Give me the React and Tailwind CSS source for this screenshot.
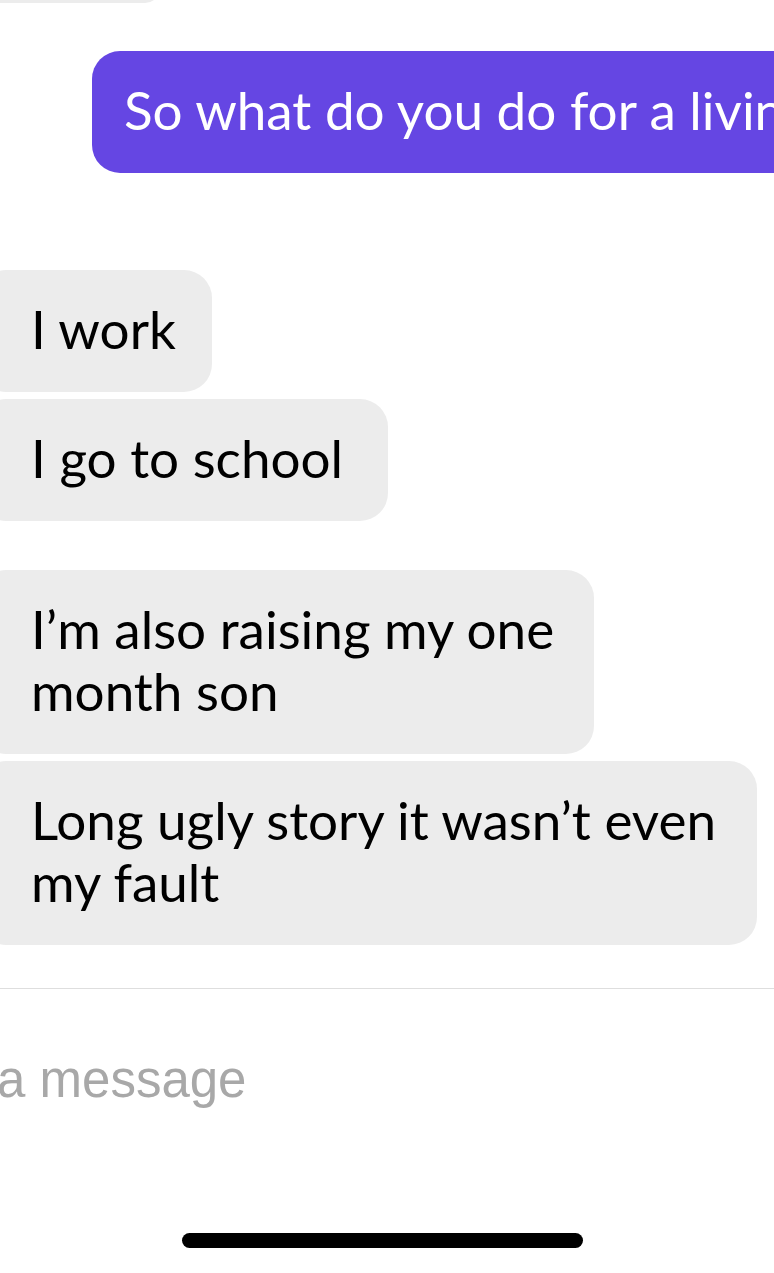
export default function App() {
  const bubble = "bg-[#ececec] text-black ml-[-22px] rounded-[28px] pl-[53px] pt-[28px] pb-[32px] leading-[62px]";

  return (
    <div
      className="w-full h-[1273px] overflow-hidden bg-white flex flex-col"
      style={{ fontFamily: 'Lato, "Open Sans", sans-serif' }}
    >
      {/* tail of previous message */}
      <div className="bg-[#ececec] w-[182px] h-[30px] ml-[-22px] mt-[-27px] rounded-[28px] shrink-0" />

      <div className="text-[53px] flex flex-col">
        {/* outgoing */}
        <div className="mt-[48px] ml-[92px] w-[720px] shrink-0 bg-[#6546e3] text-white rounded-[28px] pl-[32px] pt-[28px] pb-[32px] leading-[62px] whitespace-nowrap">
          So what do you do for a living?
        </div>

        {/* incoming */}
        <div className="mt-[97px] flex flex-col gap-[7px]">
          <div className={`${bubble} w-[234px]`}>I work</div>
          <div className={`${bubble} w-[410px]`}>I go to school</div>
        </div>

        <div className="mt-[49px] flex flex-col gap-[7px]">
          <div className={`${bubble} w-[616px]`}>
            I’m also raising my one<br />month son
          </div>
          <div className={`${bubble} w-[779px]`}>
            Long ugly story it wasn’t even<br />my fault
          </div>
        </div>
      </div>

      {/* composer */}
      <div className="mt-[43px] border-t border-[#dedede]" />
      <div
        className="mt-[65px] ml-[-3px] text-[51px] leading-[51px] text-[#a8a8a8]"
        style={{ fontFamily: '"Liberation Sans", Arial, sans-serif' }}
      >
        a message
      </div>

      <div className="mt-auto mb-[25px] ml-[182px] w-[401px] h-[15px] rounded-full bg-black" />
    </div>
  );
}
